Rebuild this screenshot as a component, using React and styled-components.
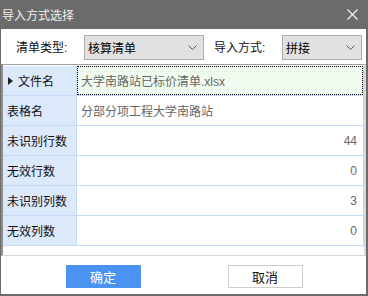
import React from 'react'
import styled, {createGlobalStyle} from 'styled-components'

const Global = createGlobalStyle`
    body {
        margin: 0;
        font-family: "Liberation Sans", "Noto Sans CJK SC", sans-serif;
        font-size: 12px;
    }
`

const Window = styled.div`
    width: 368px;
    height: 296px;
    box-sizing: border-box;
    background: #6b6b6b;
    padding: 0 2px 2px 1px;
    display: flex;
    flex-direction: column;
`

const TitleBar = styled.div`
    height: 29px;
    display: flex;
    align-items: center;
    justify-content: space-between;
    padding: 0 8px 0 1px;
    color: #f0f0f0;
    font-size: 12px;
    flex-shrink: 0;
`

const Body = styled.div`
    flex: 1;
    background: #fff;
    display: flex;
    flex-direction: column;
`

const Toolbar = styled.div`
    height: 35px;
    display: flex;
    align-items: center;
    padding: 0 0 0 15px;
    flex-shrink: 0;
`

const Label = styled.div`
    width: ${p => p.w}px;
    margin-left: ${p => p.ml || 0}px;
    color: #111;
`

const Select = styled.div`
    width: ${p => p.w}px;
    height: 25px;
    box-sizing: border-box;
    background: #e1e1e1;
    border: 1px solid #adadad;
    display: flex;
    align-items: center;
    justify-content: space-between;
    padding: 0 6px 0 3px;
    color: #000;
    margin-top: 1px;
`

const Grid = styled.div`
    height: 192px;
    box-sizing: border-box;
    border-top: 1px solid #a0a0a0;
    border-left: 2px solid #8e8e8e;
    border-right: 2px solid #d8d8d8;
    border-bottom: 1px solid #d6d6d6;
    padding-top: 1px;
    flex-shrink: 0;
`

const Table = styled.div`
    border-right: 1px solid #c2d9f7;
`

const Row = styled.div`
    display: grid;
    grid-template-columns: 74px 1fr;
    height: 30px;
    box-sizing: border-box;
    border-bottom: 1px solid #c2d9f7;
`

const Head = styled.div`
    background: #dce9fb;
    border-right: 1px solid #c2d9f7;
    display: flex;
    align-items: center;
    padding-left: ${p => (p.current ? 5 : 4)}px;
    color: #111;
`

const Arrow = styled.span`
    width: 0;
    height: 0;
    border-top: 4px solid transparent;
    border-bottom: 4px solid transparent;
    border-left: 5px solid #222;
    margin-right: 5px;
`

const Value = styled.div`
    display: flex;
    align-items: center;
    justify-content: ${p => (p.num ? 'flex-end' : 'flex-start')};
    padding: 0 6px 0 4px;
    color: #666;
    background: ${p => (p.focus ? '#eefbee' : '#fff')};
    outline: ${p => (p.focus ? '1px dotted #000' : 'none')};
    outline-offset: -1px;
`

const Footer = styled.div`
    flex: 1;
    display: flex;
    justify-content: center;
    align-items: flex-start;
    gap: 87px;
    padding-top: 9px;
    padding-left: 1px;
`

const Button = styled.div`
    width: 75px;
    height: 23px;
    box-sizing: border-box;
    display: flex;
    align-items: center;
    justify-content: center;
    background: ${p => (p.primary ? '#4b93f1' : '#fff')};
    color: ${p => (p.primary ? '#fff' : '#111')};
    border: 1px solid ${p => (p.primary ? '#4b93f1' : '#cccccc')};
    font-size: 13px;
`

const Chevron = () => (
    <svg width="9" height="5" viewBox="0 0 9 5">
        <polyline points="0.5,0.5 4.5,4.5 8.5,0.5" fill="none" stroke="#555" strokeWidth="1" />
    </svg>
)

const rows = [
    {name: '文件名', value: '大学南路站已标价清单.xlsx', current: true},
    {name: '表格名', value: '分部分项工程大学南路站'},
    {name: '未识别行数', value: '44', num: true},
    {name: '无效行数', value: '0', num: true},
    {name: '未识别列数', value: '3', num: true},
    {name: '无效列数', value: '0', num: true},
]

export default function App() {
    return (
        <Window>
            <Global />
            <TitleBar>
                <span>导入方式选择</span>
                <svg width="11" height="11" viewBox="0 0 11 11">
                    <path d="M0.5 0.5 L10.5 10.5 M10.5 0.5 L0.5 10.5" stroke="#f0f0f0" strokeWidth="1.3" />
                </svg>
            </TitleBar>
            <Body>
                <Toolbar>
                    <Label w={68}>清单类型:</Label>
                    <Select w={120}>
                        <span>核算清单</span>
                        <Chevron />
                    </Select>
                    <Label w={68} ml={10}>导入方式:</Label>
                    <Select w={80}>
                        <span>拼接</span>
                        <Chevron />
                    </Select>
                </Toolbar>
                <Grid>
                    <Table>
                        {rows.map(r => (
                            <Row key={r.name}>
                                <Head current={r.current}>
                                    {r.current && <Arrow />}
                                    {r.name}
                                </Head>
                                <Value num={r.num} focus={r.current}>{r.value}</Value>
                            </Row>
                        ))}
                    </Table>
                </Grid>
                <Footer>
                    <Button primary>确定</Button>
                    <Button>取消</Button>
                </Footer>
            </Body>
        </Window>
    )
}
